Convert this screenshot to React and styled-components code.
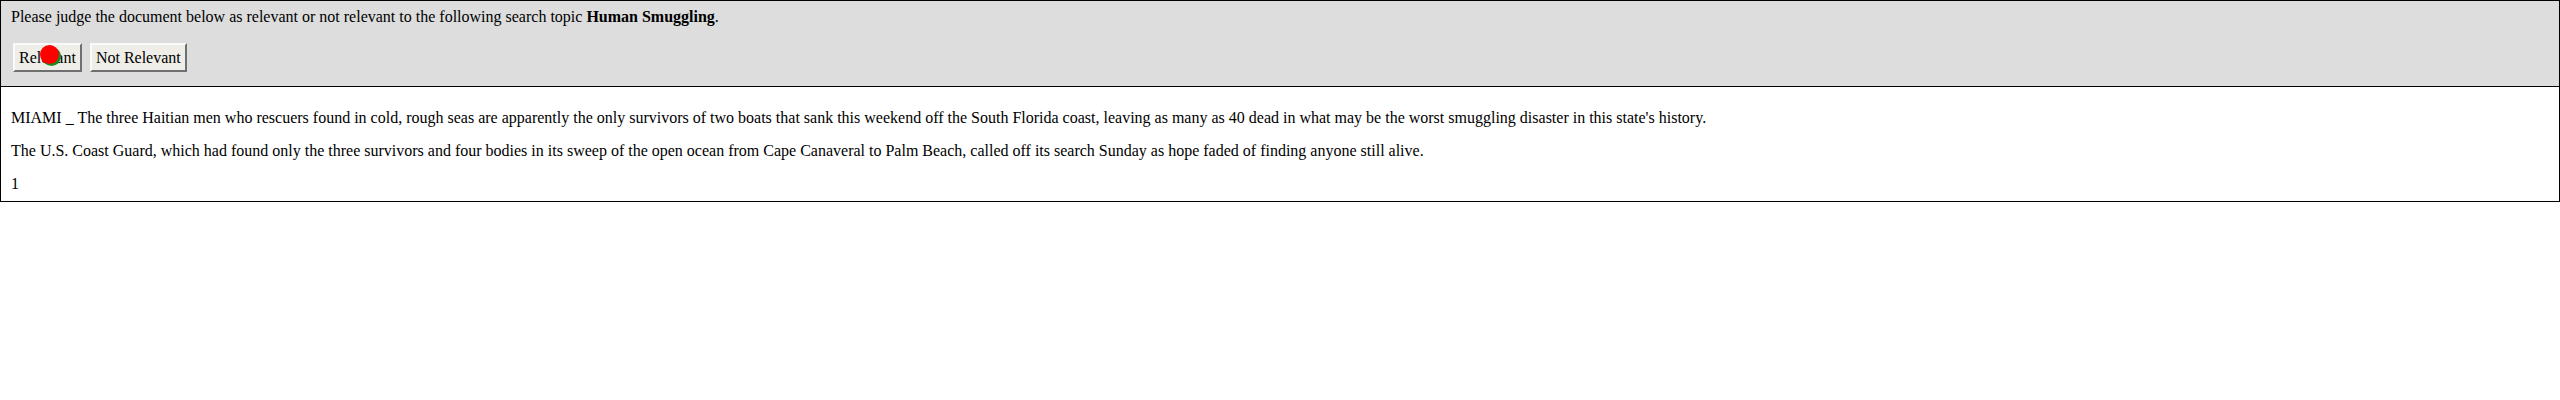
import React from 'react';
import styled, { createGlobalStyle } from 'styled-components';

const GlobalStyle = createGlobalStyle`
  body {
    margin: 0;
    font-family: "Liberation Serif", "Times New Roman", serif;
    font-size: 16px;
    color: #000;
    background: #fff;
  }
`;

const Page = styled.div`
  width: 2560px;
`;

const Header = styled.div`
  position: relative;
  background: #dddddd;
  border: 1px solid #000;
  padding: 7px 10px 14px 10px;
`;

const Prompt = styled.div`
  line-height: 18px;
`;

const ButtonRow = styled.div`
  display: flex;
  gap: 8px;
  margin-top: 17px;
  padding-left: 2px;
`;

const JudgeButton = styled.button`
  font-family: inherit;
  font-size: 16px;
  line-height: 18px;
  color: #000;
  background: #efede8;
  border: 2px solid;
  border-color: #fafafa #6f6f6f #6f6f6f #fafafa;
  padding: 4px 4px 3px;
  margin: 0;
  cursor: pointer;
`;

const Cursor = styled.span`
  position: absolute;
  left: ${(p) => p.x}px;
  top: ${(p) => p.y}px;
  width: 19px;
  height: 19px;
  border-radius: 50%;
  background: ${(p) => p.color};
`;

const Document = styled.div`
  border: 1px solid #000;
  border-top: none;
  padding: 21px 10px 8px 10px;
`;

const Para = styled.p`
  margin: 0 0 14px 0;
  line-height: 19px;

  &:last-child {
    margin-bottom: 0;
  }
`;

const App = () => (
  <Page>
    <GlobalStyle />
    <Header>
      <Prompt>
        Please judge the document below as relevant or not relevant to the following search topic <b>Human Smuggling</b>.
      </Prompt>
      <ButtonRow>
        <JudgeButton>Relevant</JudgeButton>
        <JudgeButton>Not Relevant</JudgeButton>
      </ButtonRow>
      <Cursor x={41} y={46} color="#1f8a1f" />
      <Cursor x={39} y={44} color="#ff0000" />
    </Header>
    <Document>
      <Para>
        MIAMI _ The three Haitian men who rescuers found in cold, rough seas are apparently the only survivors of two boats that sank this weekend off the South Florida coast, leaving as many as 40 dead in what may be the worst smuggling disaster in this state's history.
      </Para>
      <Para>
        The U.S. Coast Guard, which had found only the three survivors and four bodies in its sweep of the open ocean from Cape Canaveral to Palm Beach, called off its search Sunday as hope faded of finding anyone still alive.
      </Para>
      <Para>1</Para>
    </Document>
  </Page>
);

export default App;
